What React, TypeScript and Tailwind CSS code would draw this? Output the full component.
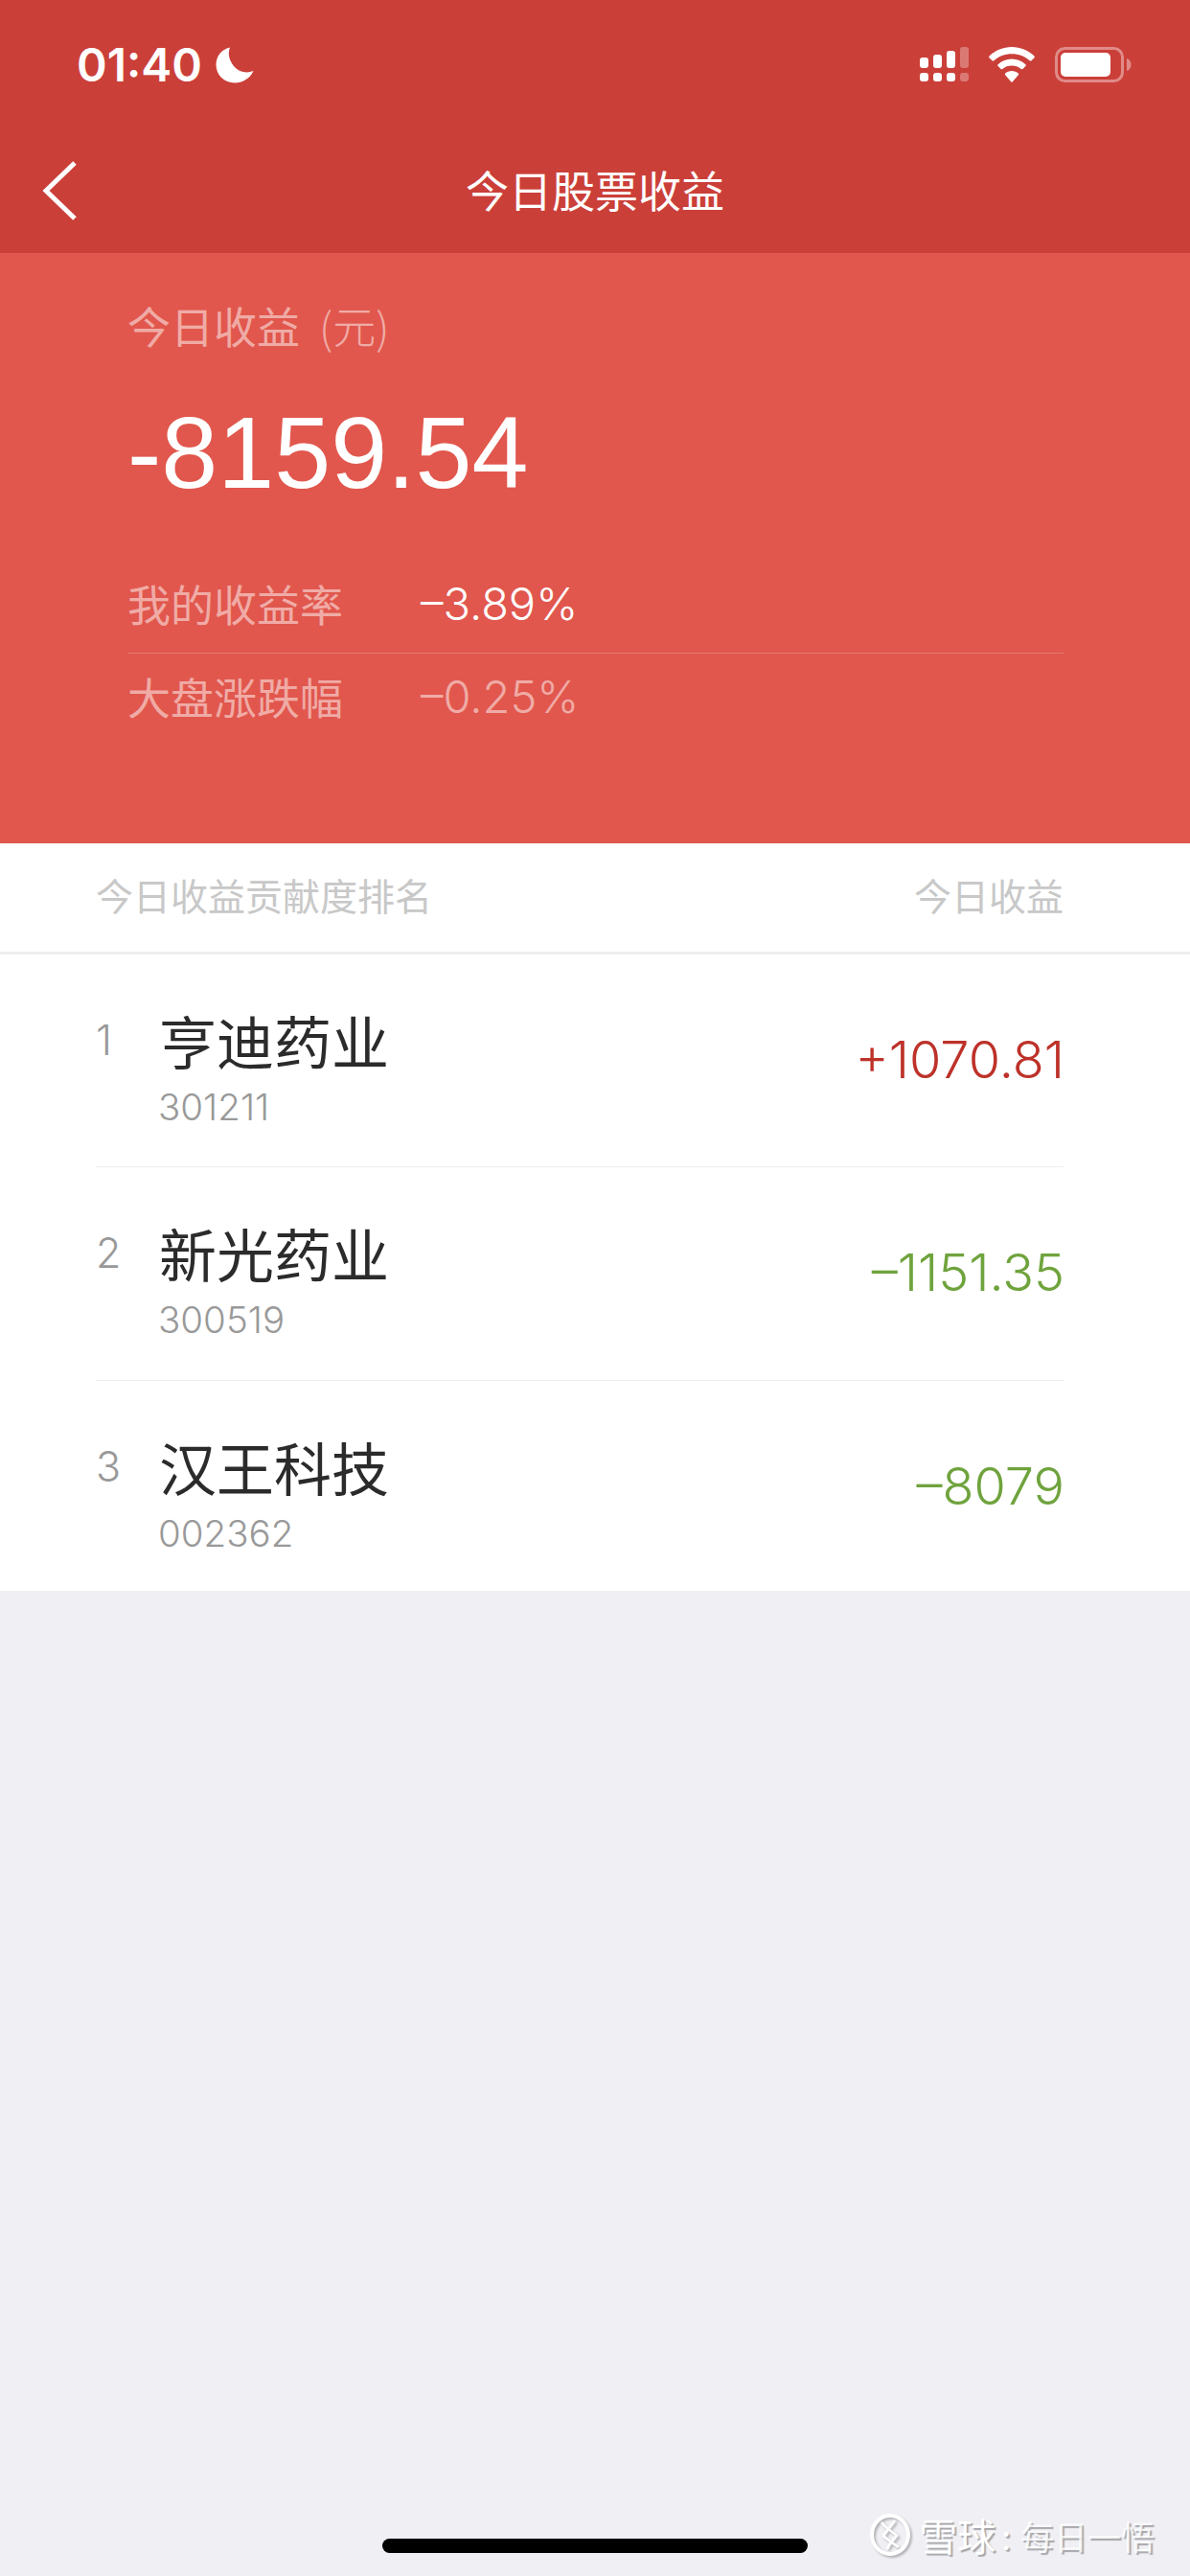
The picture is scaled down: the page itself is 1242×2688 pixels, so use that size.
const numFont = "font-['Inter','Noto_Sans_CJK_SC',sans-serif] font-light";
const bigFont = "font-['Liberation_Sans',sans-serif]";
const cjkFont = "font-['Noto_Sans_CJK_SC','Liberation_Sans',sans-serif]";

const stocks = [
  { rank: 1, name: "亨迪药业", code: "301211", amount: "+1070.81", color: "text-[#bd3229]", height: "h-[222px]" },
  { rank: 2, name: "新光药业", code: "300519", amount: "–1151.35", color: "text-[#6fa33d]", height: "h-[223px]" },
  { rank: 3, name: "汉王科技", code: "002362", amount: "–8079", color: "text-[#6fa33d]", height: "h-[219px]" },
];

const StatusBar = () => (
  <div className="flex h-[134px] items-center justify-between pl-[80px] pr-[61px] pt-[1px] text-white">
    <div className="flex items-center gap-[14px]">
      <span className="font-['Inter',sans-serif] text-[48px] font-semibold leading-none">01:40</span>
      <svg width="40" height="38" viewBox="0 0 40 38">
        <path
          d="M15 0.5 C6 2.5 0.5 10 0.5 18.5 C0.5 29 9 37.5 20 37.5 C29 37.5 36.5 32 39.5 25 C32 28 24 26 19 20 C14 14 12.5 7 15 0.5 Z"
          fill="#fff"
        />
      </svg>
    </div>
    <div className="flex items-center gap-[21px]">
      <svg width="51" height="37" viewBox="0 0 51 37" fill="#fff">
        <rect x="0" y="11" width="9" height="11" rx="3" />
        <rect x="14" y="8" width="9" height="14" rx="3" />
        <rect x="28" y="4" width="9" height="18" rx="3" />
        <rect x="42" y="0" width="9" height="22" rx="3" opacity="0.3" />
        <rect x="0" y="27" width="9" height="9" rx="3" />
        <rect x="14" y="27" width="9" height="9" rx="3" />
        <rect x="28" y="27" width="9" height="9" rx="3" />
        <rect x="42" y="27" width="9" height="9" rx="3" opacity="0.3" />
      </svg>
      <svg width="48" height="37" viewBox="0 0 48 37" fill="#fff">
        <path d="M24 0 C33 0 41 3.5 47.5 9.5 C48 10 48 10.8 47.5 11.3 L44.5 14.3 C44 14.8 43.2 14.8 42.7 14.3 C37.7 9.8 31.1 7.2 24 7.2 C16.9 7.2 10.3 9.8 5.3 14.3 C4.8 14.8 4 14.8 3.5 14.3 L0.5 11.3 C0 10.8 0 10 0.5 9.5 C7 3.5 15 0 24 0 Z" />
        <path d="M24 12.5 C29.5 12.5 34.5 14.6 38.4 18.2 C38.9 18.7 38.9 19.4 38.4 19.9 L35.4 22.9 C34.9 23.4 34.2 23.4 33.7 22.9 C31 20.6 27.7 19.5 24 19.5 C20.3 19.5 17 20.6 14.3 22.9 C13.8 23.4 13.1 23.4 12.6 22.9 L9.6 19.9 C9.1 19.4 9.1 18.7 9.6 18.2 C13.5 14.6 18.5 12.5 24 12.5 Z" />
        <path d="M24 25 C26.6 25 29 26 30.8 27.6 C31.3 28.1 31.3 28.8 30.8 29.3 L24.9 36.2 C24.4 36.8 23.6 36.8 23.1 36.2 L17.2 29.3 C16.7 28.8 16.7 28.1 17.2 27.6 C19 26 21.4 25 24 25 Z" />
      </svg>
      <svg width="80" height="37" viewBox="0 0 80 37" fill="none">
        <rect x="1.5" y="1.5" width="69" height="34" rx="9" stroke="#fff" strokeOpacity="0.4" strokeWidth="3" />
        <rect x="6" y="6" width="52" height="25" rx="5" fill="#fff" />
        <path d="M75 12 C78 13 79.5 15.5 79.5 18.5 C79.5 21.5 78 24 75 25 Z" fill="#fff" fillOpacity="0.4" />
      </svg>
    </div>
  </div>
);

const NavBar = () => (
  <div className="relative flex h-[130px] items-center justify-center text-white">
    <svg className="absolute left-[42px] top-[34px]" width="40" height="62" viewBox="0 0 40 62" fill="none">
      <path d="M36 2 L6 31 L36 60" stroke="#fff" strokeWidth="5" />
    </svg>
    <h1 className={`${cjkFont} mb-[3px] text-[45px] font-normal leading-none`}>今日股票收益</h1>
  </div>
);

const Hero = () => (
  <div className="h-[616px] bg-[#e1574d] pl-[133px] pr-[132px] pt-[42px]">
    <p className={`${cjkFont} text-[45px] leading-[68px] text-white/50`}>
      今日收益 <span className="ml-[10px] font-light">(元)</span>
    </p>
    <p className={`${bigFont} mt-[38px] text-[106px] leading-[120px] text-white`}>-8159.54</p>
    <div className="mt-[52px] flex h-[98px] items-center border-b border-white/20 pb-[7px]">
      <span className={`${cjkFont} w-[306px] text-[45px] leading-none text-white/50`}>我的收益率</span>
      <span className={`${numFont} text-[47px] leading-none text-white`}>–3.89%</span>
    </div>
    <div className="flex h-[88px] items-center">
      <span className={`${cjkFont} w-[306px] text-[45px] leading-none text-white/50`}>大盘涨跌幅</span>
      <span className={`${numFont} text-[47px] leading-none text-white/50`}>–0.25%</span>
    </div>
  </div>
);

const StockRow = ({ stock, last }: { stock: (typeof stocks)[number]; last: boolean }) => (
  <div className={`${stock.height} flex pl-[100px] pr-[132px]`}>
    <div className={`${last ? "" : "border-b border-[#eeeeee]"} flex flex-1 items-start`}>
      <span className={`${numFont} mt-[68px] w-[66px] text-[43px] leading-none text-[#999999]`}>{stock.rank}</span>
      <div className="mt-[53px] flex flex-col">
        <span className={`${cjkFont} text-[60px] leading-[72px] text-[#2b2b2b]`}>{stock.name}</span>
        <span className={`${numFont} -ml-[1px] mt-[12px] text-[38.5px] leading-[45px] text-[#999999]`}>
          {stock.code}
        </span>
      </div>
      <span className={`${numFont} ${stock.color} -mr-[1px] ml-auto mt-[83px] text-[54px] leading-none`}>
        {stock.amount}
      </span>
    </div>
  </div>
);

const Watermark = () => (
  <div className="absolute bottom-[20px] right-[37px] flex items-center text-white [text-shadow:2px_2px_1px_rgba(0,0,0,0.3)]">
    <svg width="46" height="46" viewBox="0 0 46 46" fill="none" className="mr-[7px] drop-shadow-[2px_2px_1px_rgba(0,0,0,0.25)]">
      <ellipse cx="23" cy="23" rx="19" ry="20" stroke="#fff" strokeWidth="4" />
      <path d="M14 10 C18 16 26 20 30 24 C26 28 22 32 20 38 M28 8 C24 14 20 18 16 24 C20 28 26 32 32 36" stroke="#fff" strokeWidth="2.5" />
    </svg>
    <span className={`${cjkFont} text-[40px] leading-none`}>雪球</span>
    <span className={`${cjkFont} ml-[6px] mr-[10px] text-[35px] leading-none`}>:</span>
    <span className={`${cjkFont} text-[35px] leading-none text-white/80`}>每日一悟</span>
  </div>
);

export default function App() {
  return (
    <div className="relative flex h-[2688px] w-[1242px] flex-col overflow-hidden bg-[#efeff4]">
      <div className="bg-[#cb3f39]">
        <StatusBar />
        <NavBar />
      </div>
      <Hero />
      <div className="flex h-[116px] items-center justify-between border-b-[3px] border-[#eeeeee] bg-white pb-[6px] pl-[100px] pr-[132px]">
        <span className={`${cjkFont} text-[39px] leading-none text-[#c8c8c8]`}>今日收益贡献度排名</span>
        <span className={`${cjkFont} text-[39px] leading-none text-[#c8c8c8]`}>今日收益</span>
      </div>
      <div className="bg-white">
        {stocks.map((stock, i) => (
          <StockRow key={stock.code} stock={stock} last={i === stocks.length - 1} />
        ))}
      </div>
      <div className="mt-auto flex justify-center pb-[24px]">
        <div className="h-[15px] w-[444px] rounded-full bg-black" />
      </div>
      <Watermark />
    </div>
  );
}
